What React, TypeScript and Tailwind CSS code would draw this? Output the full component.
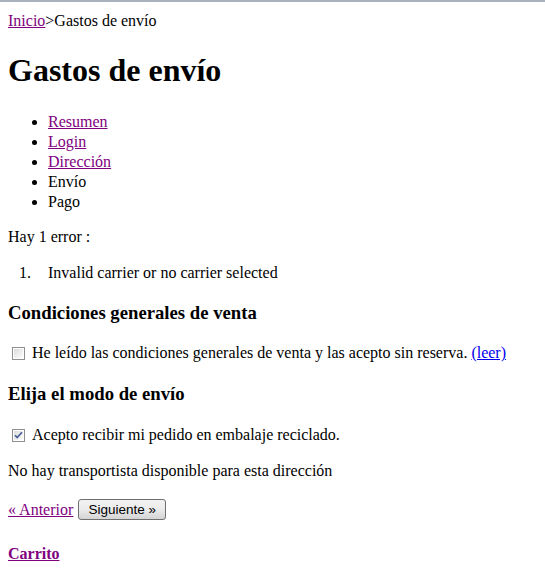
import React from "react";

const steps = [
  { label: "Resumen", link: true },
  { label: "Login", link: true },
  { label: "Dirección", link: true },
  { label: "Envío", link: false },
  { label: "Pago", link: false },
];

function Checkbox({ checked }: { checked?: boolean }) {
  return (
    <svg width="13" height="13" viewBox="0 0 13 13" className="ml-[4px] mr-[7px] shrink-0">
      <defs>
        <linearGradient id={checked ? "cbg1" : "cbg0"} x1="0" y1="0" x2="1" y2="1">
          <stop offset="0" stopColor="#dcdcdc" />
          <stop offset="1" stopColor="#fdfdfd" />
        </linearGradient>
      </defs>
      <rect x="0.5" y="0.5" width="12" height="12" fill="#ffffff" stroke="#8f8f8f" />
      <rect x="2" y="2" width="9" height="9" fill={`url(#${checked ? "cbg1" : "cbg0"})`} />
      {checked && (
        <path d="M3 6.2 L5.2 8.6 L10 3.2" fill="none" stroke="#4a5f97" strokeWidth="1.7" />
      )}
    </svg>
  );
}

export default function App() {
  return (
    <div className="min-h-[584px] bg-white border-t-2 border-[#aab2c0] px-2 font-['Liberation_Serif',serif] text-[16px] leading-[20px] text-black">
      <div className="mt-[9px]">
        <a href="#" className="text-[#800080] underline">Inicio</a>&gt;Gastos de envío
      </div>

      <h1 className="mt-[21px] text-[32px] leading-[37px] font-bold">Gastos de envío</h1>

      <ul className="mt-[23px] list-disc pl-10">
        {steps.map(s => (
          <li key={s.label}>
            {s.link ? <a href="#" className="text-[#800080] underline">{s.label}</a> : s.label}
          </li>
        ))}
      </ul>

      <p className="mt-[15px]">Hay 1 error :</p>
      <ol className="mt-[16px] pl-[11px]">
        <li className="flex">
          <span className="w-[29px] shrink-0">1.</span>
          <span>Invalid carrier or no carrier selected</span>
        </li>
      </ol>

      <h3 className="mt-[19px] text-[18.72px] leading-[22px] font-bold">Condiciones generales de venta</h3>
      <div className="mt-[19px] flex items-center">
        <Checkbox />
        <span>
          He leído las condiciones generales de venta y las acepto sin reserva.{" "}
          <a href="#" className="text-[#0000ee] underline">(leer)</a>
        </span>
      </div>

      <h3 className="mt-[20px] text-[18.72px] leading-[22px] font-bold">Elija el modo de envío</h3>
      <div className="mt-[20px] flex items-center">
        <Checkbox checked />
        <span>Acepto recibir mi pedido en embalaje reciclado.</span>
      </div>

      <p className="mt-[16px]">No hay transportista disponible para esta dirección</p>

      <div className="mt-[18px] flex items-center h-[21px]">
        <a href="#" className="text-[#800080] underline">« Anterior</a>
        <button className="ml-[5px] h-[21px] w-[88px] rounded-[3px] border border-[#707070] bg-gradient-to-b from-[#f2f2f2] via-[#ebebeb] to-[#d4d4d4] font-['Liberation_Sans',sans-serif] text-[13.5px] leading-[19px] text-black">
          Siguiente »
        </button>
      </div>

      <p className="mt-[24px] font-bold">
        <a href="#" className="text-[#800080] underline">Carrito</a>
      </p>
    </div>
  );
}
